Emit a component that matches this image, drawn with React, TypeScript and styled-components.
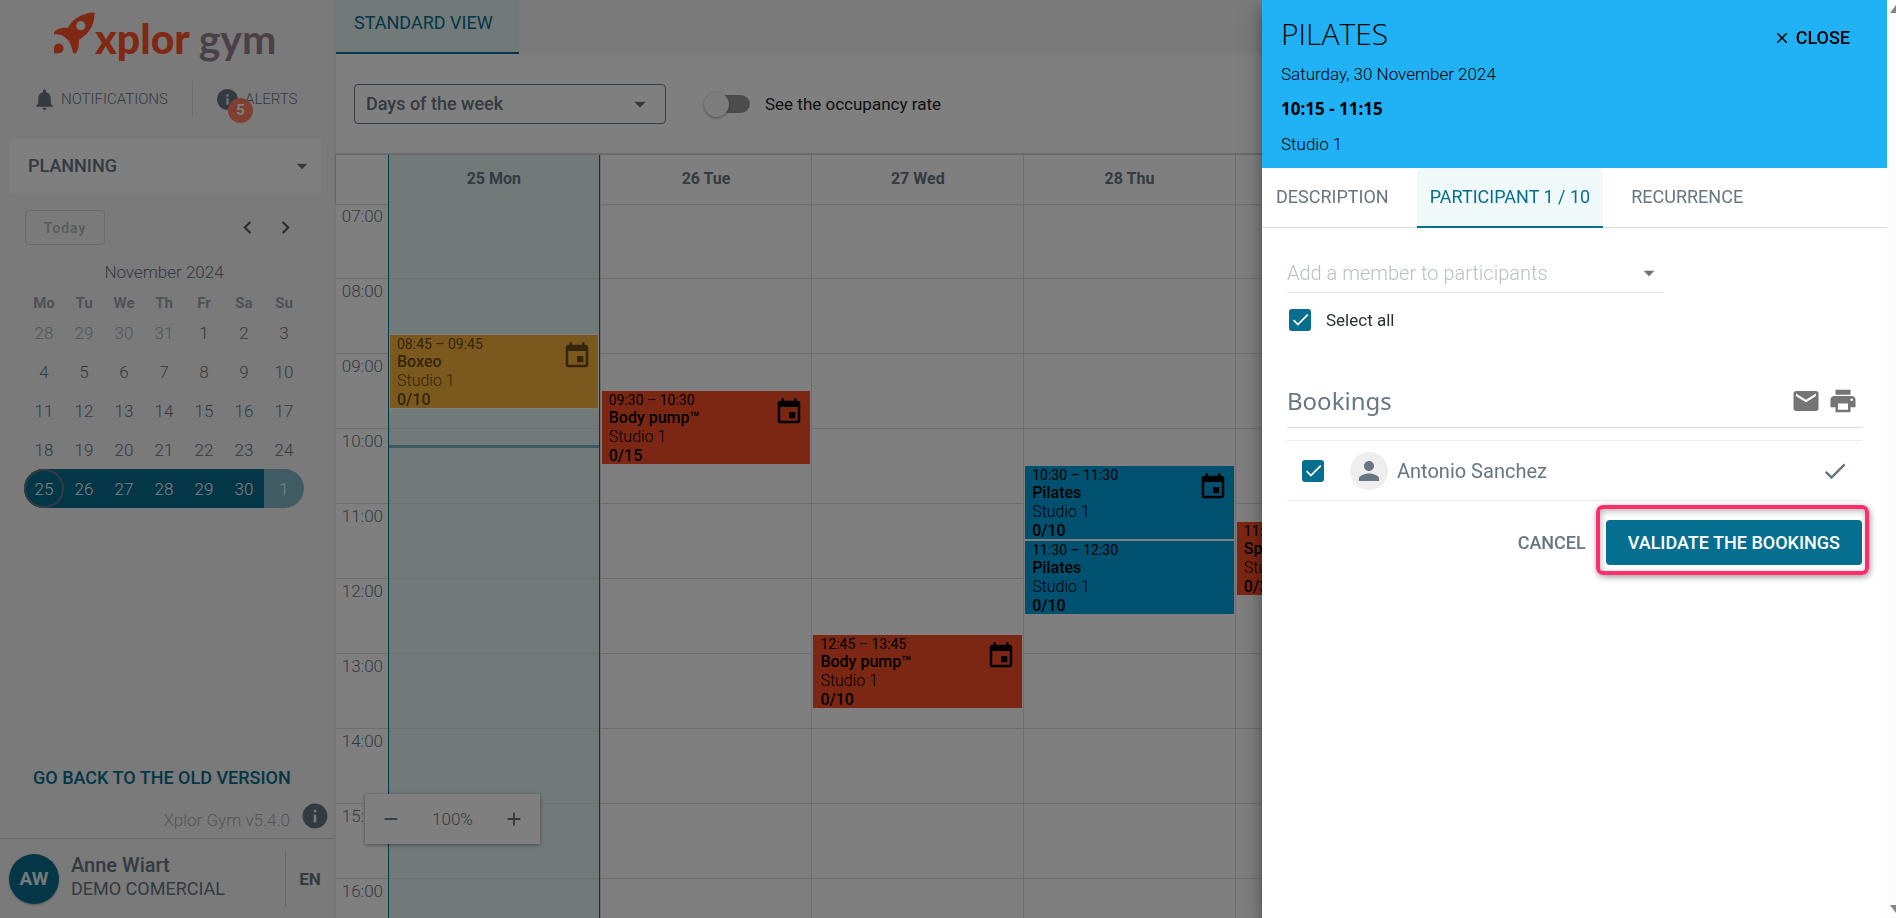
import React, { useState } from 'react';
import styled, { createGlobalStyle, css } from 'styled-components';
import {
  MdAdd,
  MdArrowDropDown,
  MdCheck,
  MdChevronLeft,
  MdChevronRight,
  MdClose,
  MdEmail,
  MdEvent,
  MdInfo,
  MdNotifications,
  MdPerson,
  MdPrint,
  MdRemove,
} from 'react-icons/md';

const color = {
  teal: '#066e8f',
  slate: '#667683',
  dark: '#2b2f33',
  line: '#dcdcdc',
  soft: '#f5f5f5',
  tint: '#e2f2f2',
  sky: '#20b2f5',
};

const HOUR = 75;
const FIRST_HOUR = 7;

const GlobalStyle = createGlobalStyle`
  *, *::before, *::after { box-sizing: border-box; }
  body {
    margin: 0;
    overflow: hidden;
    background: #fff;
    color: ${color.slate};
    font-family: Roboto, "Liberation Sans", sans-serif;
    font-size: 17px;
    line-height: 24px;
  }
  button, input, select { font: inherit; color: inherit; }
  button { padding: 0; border: 0; background: none; cursor: pointer; }
  table { border-collapse: collapse; }
  h1, h2, p { margin: 0; }
  a { color: inherit; text-decoration: none; }
`;

const Page = styled.div`
  display: flex;
  height: 100vh;
`;

/* ---------- Sidebar ---------- */

const Sidebar = styled.aside`
  display: flex;
  flex-direction: column;
  flex: none;
  width: 336px;
  background: ${color.soft};
  border-right: 2px solid #ececec;
`;

const Logo = styled.a`
  display: flex;
  height: 66px;
  padding: 12px 0 0 54px;
`;

const LogoText = styled.span`
  padding-top: 3px;
  color: #ff5028;
  font-family: Lato, sans-serif;
  font-size: 41px;
  font-weight: 900;
  line-height: 48px;
  white-space: nowrap;
`;

const LogoSuffix = styled.span`
  color: #94828f;
  font-weight: 700;
`;

const Alerts = styled.div`
  display: flex;
  align-items: center;
  height: 66px;
  font-size: 15px;
  font-weight: 300;
`;

const AlertLink = styled.button`
  display: flex;
  align-items: center;
  gap: 5px;
  position: relative;
  height: 36px;

  svg { flex: none; }
  &:first-child { width: 193px; padding-left: 32px; gap: 4px; border-right: 1px solid ${color.line}; }
  &:last-child { padding-left: 22px; }
`;

const Badge = styled.span`
  position: absolute;
  left: 35px;
  top: 17px;
  width: 25px;
  height: 25px;
  border-radius: 50%;
  background: #ff8066;
  color: #fff;
  font-size: 15px;
  font-weight: 700;
  line-height: 25px;
`;

const Section = styled.button`
  display: flex;
  align-items: center;
  justify-content: space-between;
  height: 54px;
  margin: 7px 13px 0 9px;
  padding: 0 6px 0 19px;
  background: #fff;
  font-size: 18px;
  font-weight: 500;
`;

const MiniNav = styled.div`
  display: flex;
  align-items: center;
  margin: 17px 30px 0 25px;
`;

const Today = styled.button`
  width: 80px;
  height: 35px;
  margin-right: auto;
  border: 1px solid #d4d4d4;
  border-radius: 4px;
  color: #b4b4b4;
  font-size: 14px;
  font-weight: 500;
  letter-spacing: 1px;
`;

const Arrow = styled.button`
  display: flex;
  justify-content: center;
  width: 38px;
  color: #555;
`;

const MiniTable = styled.table`
  width: 280px;
  margin: 15px 0 0 24px;
  table-layout: fixed;
  font-weight: 300;
  text-align: center;

  caption { height: 24px; }
  th { height: 29px; padding: 8px 0 0; color: #9aa5ad; font-size: 15px; font-weight: 700; line-height: 20px; }
`;

type DayKind = 'normal' | 'muted' | 'start' | 'range' | 'end';

const MiniCell = styled.td<{ $kind: DayKind }>`
  height: 39px;
  padding: 0;
  ${({ $kind }) => $kind === 'muted' && css`color: #a3abb1;`}
  ${({ $kind }) => ($kind === 'start' || $kind === 'range') && css`background: ${color.teal}; color: #fff;`}
  ${({ $kind }) => $kind === 'start' && css`border-radius: 20px 0 0 20px;`}
  ${({ $kind }) => $kind === 'end' && css`background: #83b7c8; color: #fff; border-radius: 0 20px 20px 0;`}

  button {
    width: 100%;
    height: 39px;
    border-radius: 20px;
    ${({ $kind }) => $kind === 'start' && css`border: 2px solid ${color.slate};`}
  }
`;

const SidebarFoot = styled.div`
  margin-top: auto;
`;

const OldVersion = styled.a`
  display: block;
  padding-left: 33px;
  color: ${color.teal};
  font-size: 18px;
  font-weight: 500;
`;

const Version = styled.div`
  display: flex;
  align-items: flex-end;
  justify-content: flex-end;
  gap: 10px;
  height: 48px;
  padding: 0 4px 6px 0;
  color: #aaa;
  font-weight: 300;

  svg { margin-bottom: 1px; color: ${color.slate}; }
`;

const User = styled.div`
  display: flex;
  align-items: center;
  height: 80px;
  padding-left: 9px;
  border-top: 1px solid #cfcfcf;
`;

const UserAvatar = styled.span`
  width: 50px;
  height: 50px;
  margin-right: 12px;
  border-radius: 50%;
  background: ${color.teal};
  box-shadow: 0 1px 2px rgba(0, 0, 0, 0.3);
  color: #e8f2f5;
  font-size: 19px;
  font-weight: 700;
  line-height: 50px;
  text-align: center;
`;

const UserName = styled.span`
  flex: 1;
  padding-bottom: 5px;
  font-size: 18px;
  line-height: 23px;

  strong { display: block; font-size: 20px; font-weight: 500; line-height: 24px; }
`;

const Language = styled.button`
  width: 49px;
  height: 54px;
  border-left: 1px solid #cfcfcf;
  font-weight: 700;
`;

/* ---------- Planning ---------- */

const Main = styled.main`
  display: flex;
  flex: 1;
  flex-direction: column;
  position: relative;
  min-width: 0;
`;

const ViewTabs = styled.nav`
  flex: none;
  height: 54px;
  background: ${color.soft};
`;

const ViewTab = styled.button`
  height: 54px;
  padding: 0 26px 6px 18px;
  border-bottom: 2px solid ${color.teal};
  background: ${color.tint};
  color: ${color.teal};
  font-size: 18px;
`;

const Toolbar = styled.div`
  display: flex;
  align-items: center;
  flex: none;
  height: 100px;
  padding: 0 18px;
`;

const RangeSelect = styled.div`
  display: grid;
  align-items: center;
  width: 312px;

  select, svg { grid-area: 1 / 1; }
  select {
    height: 40px;
    padding: 0 11px;
    border: 1px solid ${color.slate};
    border-radius: 4px;
    background: transparent;
    font-size: 18px;
    font-weight: 500;
    appearance: none;
  }
  svg { justify-self: end; margin-right: 12px; pointer-events: none; }
`;

const SwitchLabel = styled.label`
  display: flex;
  align-items: center;
  gap: 15px;
  margin-left: 38px;
  color: #222;
`;

const Switch = styled.input`
  display: flex;
  align-items: center;
  width: 42px;
  height: 18px;
  margin: 0 0 0 4px;
  border-radius: 9px;
  background: #999;
  appearance: none;

  &::before {
    content: "";
    width: 25px;
    height: 25px;
    margin-left: -4px;
    border-radius: 50%;
    background: #fafafa;
    box-shadow: 0 1px 3px rgba(0, 0, 0, 0.4);
  }
  &:checked::before { margin-left: 21px; }
`;

const columns = css`
  display: grid;
  grid-template-columns: 52px repeat(7, 1fr);
  padding-right: 26px;
`;

const WeekHead = styled.div`
  ${columns}
  flex: none;
  height: 50px;
  position: relative;
  border-top: 1px solid #cfcfcf;
  box-shadow: 0 0 2px rgba(0, 0, 0, 0.4);
`;

const HeadCell = styled.div<{ $today?: boolean }>`
  border-left: 1px solid ${color.line};
  font-size: 16px;
  font-weight: 700;
  line-height: 48px;
  text-align: center;
  ${({ $today }) =>
    $today && css`background: ${color.tint}; border: 0 solid ${color.teal}; border-width: 0 1px;`}
`;

const WeekBody = styled.div`
  ${columns}
  flex: 1;
  min-height: 0;
  overflow: hidden;
`;

const Hour = styled.div`
  height: ${HOUR}px;
  padding-right: 5px;
  border-bottom: 1px solid ${color.line};
  font-weight: 300;
  text-align: right;
`;

const DayColumn = styled.div<{ $today?: boolean }>`
  position: relative;
  border-left: 1px solid ${color.line};
  background: repeating-linear-gradient(transparent 0 ${HOUR - 1}px, ${color.line} ${HOUR - 1}px ${HOUR}px);
  ${({ $today }) =>
    $today &&
    css`
      background-color: ${color.tint};
      border: 0 solid ${color.teal};
      border-width: 0 1px;
    `}
`;

const NowLine = styled.div`
  position: absolute;
  top: 241px;
  left: 0;
  right: 0;
  height: 3px;
  background: #79b4c5;
`;

const EventCard = styled.button<{ $start: number; $tone: string; $past?: boolean }>`
  display: grid;
  grid-template-columns: 1fr auto;
  align-content: start;
  position: absolute;
  top: ${({ $start }) => Math.floor(($start - FIRST_HOUR) * HOUR) - 1}px;
  left: 0;
  right: 0;
  height: ${HOUR}px;
  padding: 0 6px 0 7px;
  overflow: hidden;
  border: 1px solid #fff;
  background: ${({ $tone }) => $tone};
  color: ${({ $past }) => ($past ? '#6b4d16' : '#000')};
  font-size: 16px;
  line-height: 18px;
  text-align: left;

  svg { grid-area: 1 / 2 / 4 / 3; margin-top: 6px; }
  span { grid-column: 1; white-space: nowrap; }
  b { grid-column: 1; font-weight: 500; white-space: nowrap; }
`;

const EventTime = styled.span`
  font-size: 14px;
`;

const EventRoom = styled.span`
  font-weight: 300;
  line-height: 20px;
`;

const ZoomBar = styled.div`
  display: flex;
  align-items: center;
  justify-content: space-between;
  position: absolute;
  left: 29px;
  bottom: 74px;
  width: 175px;
  height: 50px;
  padding: 0 15px;
  background: #fff;
  box-shadow: 0 1px 4px rgba(0, 0, 0, 0.4);
  font-weight: 300;

  button { display: flex; }
`;

/* ---------- Drawer ---------- */

const Backdrop = styled.div`
  position: fixed;
  inset: 0;
  background: rgba(0, 0, 0, 0.5);
`;

const DrawerShell = styled.section`
  display: flex;
  position: fixed;
  inset: 0 0 0 auto;
  width: 634px;
  background: #fff;
  box-shadow: 0 8px 12px rgba(0, 0, 0, 0.3), 0 6px 30px rgba(0, 0, 0, 0.2);
`;

const Drawer = styled.div`
  flex: 1;
`;

const ScrollRail = styled.div`
  display: flex;
  flex-direction: column;
  justify-content: space-between;
  width: 9px;
  padding: 5px 0 5px 3px;
  overflow: hidden;
  background: #fcfcfc;
`;

const DrawerHead = styled.header`
  display: flex;
  justify-content: space-between;
  height: 168px;
  padding: 16px 37px 0 19px;
  background: ${color.sky};
  color: #000;
  font-weight: 300;

  h1 {
    margin-bottom: 10px;
    font-family: "Open Sans", "Noto Sans", sans-serif;
    font-size: 30px;
    font-weight: 300;
    line-height: 36px;
  }
  p { height: 35px; }
  strong { font-family: "Open Sans", "Noto Sans", sans-serif; font-weight: 700; }
`;

const CloseButton = styled.button`
  display: flex;
  align-items: center;
  align-self: flex-start;
  gap: 5px;
  height: 44px;
  font-size: 18px;
  font-weight: 500;
`;

const Tabs = styled.nav`
  display: flex;
  gap: 15px;
  height: 60px;
  padding-left: 1px;
  border-bottom: 1px solid #dcdcdc;
`;

const Tab = styled.button<{ $active?: boolean }>`
  height: 60px;
  padding: 0 13px;
  border-bottom: 2px solid transparent;
  font-size: 18px;
  ${({ $active }) =>
    $active &&
    css`
      border-color: ${color.teal};
      border-radius: 6px 6px 0 0;
      background: #f0fafb;
      color: ${color.teal};
    `}
`;

const DrawerBody = styled.div`
  padding: 25px 25px;
`;

const MemberField = styled.label`
  display: flex;
  align-items: center;
  width: 377px;
  height: 40px;
  padding-right: 2px;
  border-bottom: 1px solid #e4e4e4;

  input {
    flex: 1;
    min-width: 0;
    padding: 0;
    border: 0;
    outline: 0;
    background: none;
    font-size: 20px;
    font-weight: 300;
  }
  input::placeholder { color: #b8bfc5; opacity: 1; }
  svg { color: #707070; }
`;

const CheckLabel = styled.label`
  display: flex;
  align-items: center;
  gap: 15px;
  height: 53px;
  padding-left: 2px;
  color: ${color.dark};
`;

const TickSlot = styled.span`
  display: grid;
  flex: none;
  width: 22px;
  height: 22px;

  input, svg { grid-area: 1 / 1; }
  input {
    width: 22px;
    height: 22px;
    margin: 0;
    border: 2px solid ${color.teal};
    border-radius: 3px;
    appearance: none;
  }
  input:checked { background: ${color.teal}; }
  svg { place-self: center; color: #fff; pointer-events: none; }
`;

const SectionHead = styled.div`
  display: flex;
  align-items: center;
  gap: 7px;
  height: 50px;
  margin-top: 32px;
  padding: 0 4px 4px 0;
  border-bottom: 1px solid #dadada;

  h2 {
    flex: 1;
    font-family: "Noto Sans", "Open Sans", sans-serif;
    font-size: 24px;
    font-weight: 400;
  }
  button { display: flex; color: #757575; }
`;

const Booking = styled.div`
  display: flex;
  align-items: center;
  height: 61px;
  margin-top: 12px;
  padding: 0 13px 0 15px;
  border: solid #ececec;
  border-width: 1px 0;
  font-size: 20px;
`;

const MemberAvatar = styled.span`
  display: grid;
  place-items: center;
  width: 38px;
  height: 38px;
  margin: 0 9px 0 26px;
  border-radius: 50%;
  background: #eee;
`;

const MemberName = styled.label`
  flex: 1;
`;

const Actions = styled.div`
  display: flex;
  align-items: center;
  justify-content: flex-end;
  gap: 20px;
  margin-top: 19px;
  font-size: 18px;
  font-weight: 500;
`;

const Highlight = styled.div`
  position: relative;

  &::after {
    content: "";
    position: absolute;
    inset: -15px -7px -10px -10px;
    border: 4px solid #ff2d6b;
    border-radius: 7px;
    box-shadow: 1px 2px 6px rgba(0, 0, 0, 0.4), inset 1px 2px 6px rgba(0, 0, 0, 0.3);
    pointer-events: none;
  }
`;

const PrimaryButton = styled.button`
  height: 45px;
  padding: 0 22px;
  border-radius: 4px;
  background: ${color.teal};
  color: #fff;
`;

/* ---------- Data ---------- */

const weekdays = ['Mo', 'Tu', 'We', 'Th', 'Fr', 'Sa', 'Su'];
const weeks = [
  [28, 29, 30, 31, 1, 2, 3],
  [4, 5, 6, 7, 8, 9, 10],
  [11, 12, 13, 14, 15, 16, 17],
  [18, 19, 20, 21, 22, 23, 24],
  [25, 26, 27, 28, 29, 30, 1],
];

function dayKind(week: number, index: number): DayKind {
  if (week === 0 && index < 4) return 'muted';
  if (week < 4) return 'normal';
  if (index === 0) return 'start';
  return index === 6 ? 'end' : 'range';
}

interface GymEvent {
  start: number;
  time: string;
  title: string;
  seats: string;
  tone: string;
  icon?: boolean;
  past?: boolean;
}

const days: { label: string; events: GymEvent[] }[] = [
  { label: '25 Mon', events: [{ start: 8.75, time: '08:45 – 09:45', title: 'Boxeo', seats: '0/10', tone: '#f5b13c', icon: true, past: true }] },
  { label: '26 Tue', events: [{ start: 9.5, time: '09:30 – 10:30', title: 'Body pump™', seats: '0/15', tone: '#f94e27', icon: true }] },
  { label: '27 Wed', events: [{ start: 12.75, time: '12:45 – 13:45', title: 'Body pump™', seats: '0/10', tone: '#f94e27', icon: true }] },
  {
    label: '28 Thu',
    events: [
      { start: 10.5, time: '10:30 – 11:30', title: 'Pilates', seats: '0/10', tone: '#00a1e0', icon: true },
      { start: 11.5, time: '11:30 – 12:30', title: 'Pilates', seats: '0/10', tone: '#00a1e0' },
    ],
  },
  { label: '29 Fri', events: [{ start: 11.25, time: '11:15 – 12:15', title: 'Spinning', seats: '0/30', tone: '#f94e27' }] },
  { label: '30 Sat', events: [] },
  { label: '1 Sun', events: [] },
];

const hours = Array.from({ length: 10 }, (_, i) => `${String(FIRST_HOUR + i).padStart(2, '0')}:00`);

function Rocket() {
  return (
    <svg width="41" height="42" viewBox="0 0 124 126" fill="#ff5028" aria-hidden="true">
      <path
        fillRule="evenodd"
        d="M123 1C86 2 58 18 42 47C26 46 8 50 0 61V67C32 64 52 87 57 121Q62 127 66 124C74 113 77 100 75 84C103 68 123 42 123 1ZM81 27A14 14 0 1 1 81 55A14 14 0 1 1 81 27Z"
      />
      <path d="M0 124V109A14 13 0 0 1 14 95A15 15 0 0 1 29 110A14 14 0 0 1 15 124Z" />
    </svg>
  );
}

function Tick({ id, checked, onChange }: { id: string; checked: boolean; onChange: (value: boolean) => void }) {
  return (
    <TickSlot>
      <input id={id} type="checkbox" checked={checked} onChange={(e) => onChange(e.target.checked)} />
      <MdCheck size={21} />
    </TickSlot>
  );
}

function SidebarPanel() {
  return (
    <Sidebar>
      <Logo href="#home">
        <Rocket />
        <LogoText>
          xplor <LogoSuffix>gym</LogoSuffix>
        </LogoText>
      </Logo>
      <Alerts>
        <AlertLink>
          <MdNotifications size={25} />
          NOTIFICATIONS
        </AlertLink>
        <AlertLink>
          <MdInfo size={25} />
          ALERTS
          <Badge>5</Badge>
        </AlertLink>
      </Alerts>
      <Section>
        PLANNING
        <MdArrowDropDown size={26} />
      </Section>
      <MiniNav>
        <Today>Today</Today>
        <Arrow aria-label="Previous month">
          <MdChevronLeft size={25} />
        </Arrow>
        <Arrow aria-label="Next month">
          <MdChevronRight size={25} />
        </Arrow>
      </MiniNav>
      <MiniTable>
        <caption>November 2024</caption>
        <thead>
          <tr>
            {weekdays.map((d) => (
              <th key={d}>{d}</th>
            ))}
          </tr>
        </thead>
        <tbody>
          {weeks.map((week, w) => (
            <tr key={w}>
              {week.map((d, i) => (
                <MiniCell key={i} $kind={dayKind(w, i)}>
                  <button>{d}</button>
                </MiniCell>
              ))}
            </tr>
          ))}
        </tbody>
      </MiniTable>
      <SidebarFoot>
        <OldVersion href="#old">GO BACK TO THE OLD VERSION</OldVersion>
        <Version>
          Xplor Gym v5.4.0
          <MdInfo size={30} />
        </Version>
        <User>
          <UserAvatar>AW</UserAvatar>
          <UserName>
            <strong>Anne Wiart</strong>
            DEMO COMERCIAL
          </UserName>
          <Language>EN</Language>
        </User>
      </SidebarFoot>
    </Sidebar>
  );
}

function Planning() {
  return (
    <Main>
      <ViewTabs>
        <ViewTab>STANDARD VIEW</ViewTab>
      </ViewTabs>
      <Toolbar>
        <RangeSelect>
          <select aria-label="Displayed range">
            <option>Days of the week</option>
          </select>
          <MdArrowDropDown size={28} />
        </RangeSelect>
        <SwitchLabel>
          <Switch type="checkbox" role="switch" />
          See the occupancy rate
        </SwitchLabel>
      </Toolbar>
      <WeekHead>
        <div />
        {days.map((day, i) => (
          <HeadCell key={day.label} $today={i === 0}>
            {day.label}
          </HeadCell>
        ))}
      </WeekHead>
      <WeekBody>
        <div>
          {hours.map((h) => (
            <Hour key={h}>{h}</Hour>
          ))}
        </div>
        {days.map((day, i) => (
          <DayColumn key={day.label} $today={i === 0}>
            {i === 0 && <NowLine />}
            {day.events.map((ev) => (
              <EventCard key={ev.time} $start={ev.start} $tone={ev.tone} $past={ev.past}>
                <EventTime>{ev.time}</EventTime>
                <b>{ev.title}</b>
                <EventRoom>Studio 1</EventRoom>
                <b>{ev.seats}</b>
                {ev.icon && <MdEvent size={30} />}
              </EventCard>
            ))}
          </DayColumn>
        ))}
      </WeekBody>
      <ZoomBar>
        <button aria-label="Zoom out">
          <MdRemove size={22} />
        </button>
        100%
        <button aria-label="Zoom in">
          <MdAdd size={22} />
        </button>
      </ZoomBar>
    </Main>
  );
}

function SessionDrawer() {
  const [selected, setSelected] = useState(true);
  return (
    <DrawerShell role="dialog" aria-label="Pilates">
      <Drawer>
        <DrawerHead>
          <div>
            <h1>PILATES</h1>
            <p>Saturday, 30 November 2024</p>
            <p>
              <strong>10:15 - 11:15</strong>
            </p>
            <p>Studio 1</p>
          </div>
          <CloseButton>
            <MdClose size={18} />
            CLOSE
          </CloseButton>
        </DrawerHead>
        <Tabs>
          <Tab>DESCRIPTION</Tab>
          <Tab $active>PARTICIPANT 1 / 10</Tab>
          <Tab>RECURRENCE</Tab>
        </Tabs>
        <DrawerBody>
          <MemberField>
            <input placeholder="Add a member to participants" aria-label="Add a member to participants" />
            <MdArrowDropDown size={26} />
          </MemberField>
          <CheckLabel htmlFor="select-all">
            <Tick id="select-all" checked={selected} onChange={setSelected} />
            Select all
          </CheckLabel>
          <SectionHead>
            <h2>Bookings</h2>
            <button aria-label="Send an e-mail">
              <MdEmail size={30} />
            </button>
            <button aria-label="Print">
              <MdPrint size={30} />
            </button>
          </SectionHead>
          <Booking>
            <Tick id="booking" checked={selected} onChange={setSelected} />
            <MemberAvatar>
              <MdPerson size={30} />
            </MemberAvatar>
            <MemberName htmlFor="booking">Antonio Sanchez</MemberName>
            <MdCheck size={28} />
          </Booking>
          <Actions>
            <button>CANCEL</button>
            <Highlight>
              <PrimaryButton>VALIDATE THE BOOKINGS</PrimaryButton>
            </Highlight>
          </Actions>
        </DrawerBody>
      </Drawer>
      <ScrollRail>
        <svg width="14" height="9" viewBox="0 0 14 9" fill="#858585">
          <path d="M0 8L6 0L14 8Z" />
        </svg>
        <svg width="14" height="9" viewBox="0 0 14 9" fill="#858585">
          <path d="M0 1L6 9L14 1Z" />
        </svg>
      </ScrollRail>
    </DrawerShell>
  );
}

export default function App() {
  return (
    <>
      <GlobalStyle />
      <Page>
        <SidebarPanel />
        <Planning />
      </Page>
      <Backdrop />
      <SessionDrawer />
    </>
  );
}
